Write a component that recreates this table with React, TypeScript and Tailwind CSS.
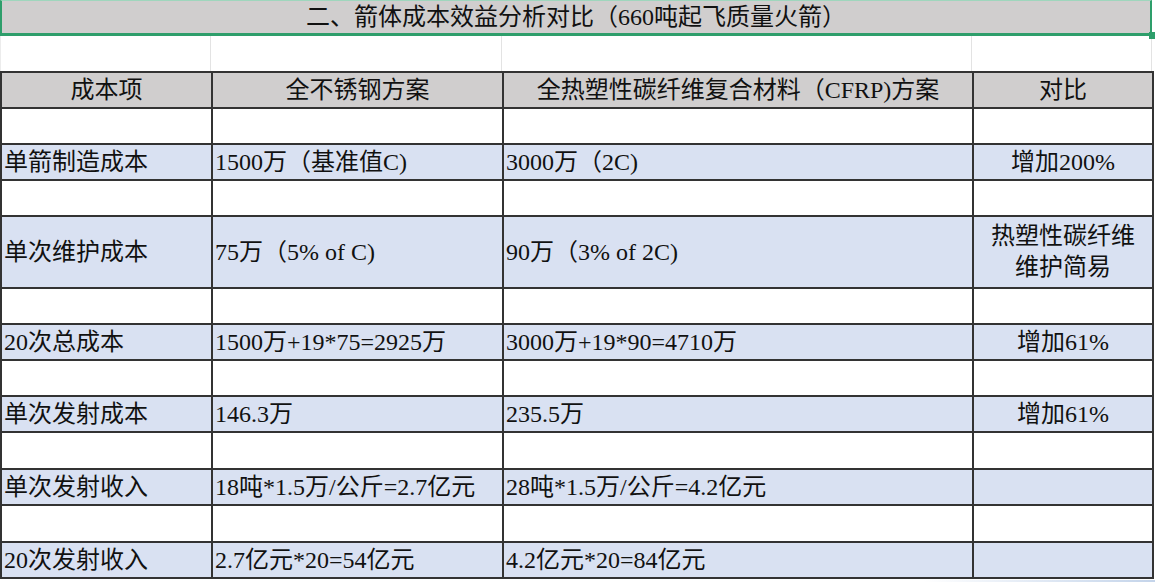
import React from "react";

type Row =
  | { empty: true; h?: string }
  | { empty?: false; a: string; b: string; c: string; d: React.ReactNode; tall?: boolean };

const rows: Row[] = [
  { empty: true },
  { a: "单箭制造成本", b: "1500万（基准值C)", c: "3000万（2C)", d: "增加200%" },
  { empty: true },
  {
    a: "单次维护成本",
    b: "75万（5% of C)",
    c: "90万（3% of 2C)",
    d: (
      <>
        热塑性碳纤维
        <br />
        维护简易
      </>
    ),
    tall: true,
  },
  { empty: true },
  { a: "20次总成本", b: "1500万+19*75=2925万", c: "3000万+19*90=4710万", d: "增加61%" },
  { empty: true },
  { a: "单次发射成本", b: "146.3万", c: "235.5万", d: "增加61%" },
  { empty: true, h: "h-[37px]" },
  { a: "单次发射收入", b: "18吨*1.5万/公斤=2.7亿元", c: "28吨*1.5万/公斤=4.2亿元", d: "" },
  { empty: true, h: "h-[37px]" },
  { a: "20次发射收入", b: "2.7亿元*20=54亿元", c: "4.2亿元*20=84亿元", d: "" },
];

const font = {
  fontFamily: '"Liberation Serif", "Noto Sans CJK SC", serif',
};

export default function App() {
  return (
    <div
      className="relative w-[1155px] h-[582px] overflow-hidden bg-white text-[#111] text-[24px]"
      style={font}
    >
      {/* Title (selected cell) */}
      <div className="relative w-[1152px] h-[36px]">
        <div className="w-full h-full bg-[#d0cece] border-l-2 border-r-2 border-b-[3px] border-t border-[#2e9e6b] border-t-[#9fd6bd] flex items-center justify-center leading-none">
          二、箭体成本效益分析对比（660吨起飞质量火箭）
        </div>
        <div className="absolute right-[-3px] bottom-[-3px] w-[6px] h-[7px] bg-[#2e9e6b]" />
      </div>

      {/* blank spreadsheet row */}
      <div className="flex h-[35px]">
        <div className="w-[211px] border-r border-[#e3e3e3] border-l border-l-[#ececec]" />
        <div className="w-[291px] border-r border-[#e3e3e3]" />
        <div className="w-[470px] border-r border-[#e3e3e3]" />
        <div className="w-[180px] border-r border-[#e3e3e3]" />
      </div>

      <table className="table-fixed border-collapse w-[1152px]">
        <colgroup>
          <col className="w-[211px]" />
          <col className="w-[291px]" />
          <col className="w-[470px]" />
          <col className="w-[180px]" />
        </colgroup>
        <tbody>
          <tr className="h-[36px] bg-[#d0cece]">
            <td className="border-2 border-[#333] text-center leading-none p-0">成本项</td>
            <td className="border-2 border-[#333] text-center leading-none p-0">全不锈钢方案</td>
            <td className="border-2 border-[#333] text-center leading-none p-0">
              全热塑性碳纤维复合材料（CFRP)方案
            </td>
            <td className="border-2 border-[#333] text-center leading-none p-0">对比</td>
          </tr>
          {rows.map((r, i) =>
            r.empty ? (
              <tr key={i} className={(r.h ?? "h-[36px]") + " bg-white"}>
                <td className="border-2 border-[#333] p-0" />
                <td className="border-2 border-[#333] p-0" />
                <td className="border-2 border-[#333] p-0" />
                <td className="border-2 border-[#333] p-0" />
              </tr>
            ) : (
              <tr key={i} className={(r.tall ? "h-[72px]" : "h-[36px]") + " bg-[#d9e1f2]"}>
                <td className="border-2 border-[#333] pl-[2px] py-0 leading-none whitespace-nowrap">{r.a}</td>
                <td className="border-2 border-[#333] pl-[2px] py-0 leading-none whitespace-nowrap">{r.b}</td>
                <td className="border-2 border-[#333] pl-[2px] py-0 leading-none whitespace-nowrap">{r.c}</td>
                <td className="border-2 border-[#333] p-0 text-center leading-[31px] whitespace-nowrap">{r.d}</td>
              </tr>
            )
          )}
        </tbody>
      </table>

      <div className="ml-[923px] mt-[1px] w-[232px] h-[4px] bg-gradient-to-r from-white to-[#c4d4ea]" />
    </div>
  );
}
